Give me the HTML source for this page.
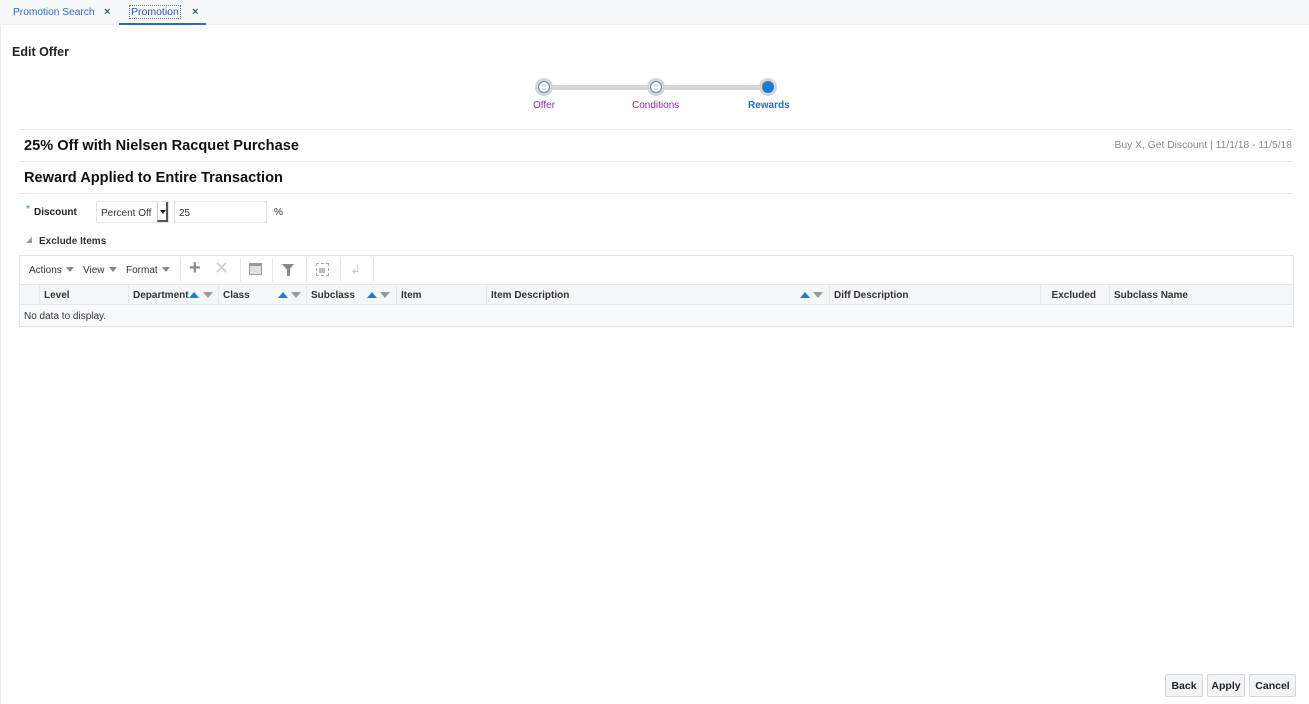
<!DOCTYPE html>
<html><head><meta charset="utf-8"><style>
*{box-sizing:border-box;margin:0;padding:0}
body{width:1309px;height:704px;background:#fff;font-family:"Liberation Sans",sans-serif;font-size:10px;color:#333;position:relative;overflow:hidden}
.a{position:absolute;white-space:nowrap}
.b{font-weight:bold}
.hl{position:absolute;left:19px;width:1274px;height:1px;background:#e0e4e8}
.col{position:absolute;top:284px;height:21px;border-right:1px solid #e4e7eb;font-weight:bold;padding:6px 4px 0;color:#333;white-space:nowrap;font-size:10px}
.up{display:inline-block;width:0;height:0;border-left:5px solid transparent;border-right:5px solid transparent;border-bottom:6px solid #1e7bd8}
.dn{display:inline-block;width:0;height:0;border-left:5px solid transparent;border-right:5px solid transparent;border-top:6px solid #999}
.tri{display:inline-block;width:0;height:0;border-left:4px solid transparent;border-right:4px solid transparent;border-top:5px solid #888;margin-left:4px;vertical-align:1px}
.btn{position:absolute;top:674px;height:23px;border:1px solid #d4d8dc;background:#f2f4f6;font-weight:bold;font-size:10.5px;text-align:center;line-height:22px;border-radius:2px;color:#222}
.sep{position:absolute;top:258px;width:1px;height:24px;background:#e4e7eb}
</style></head><body>
<div class="a" style="left:0;top:0;width:1309px;height:25px;background:#f7f8fa;border-bottom:1px solid #eceff2"></div>
<div class="a" style="left:13px;top:7px;color:#2d6cb5;font-size:10.2px">Promotion Search</div>
<div class="a b" style="left:104px;top:6px;color:#2a5aa0;font-size:11px">×</div>
<div class="a" style="left:129px;top:5px;color:#2a5aa0;font-size:10.5px;border:1px dotted #777;padding:0 1px">Promotion</div>
<div class="a b" style="left:192px;top:6px;color:#2a5aa0;font-size:11px">×</div>
<div class="a" style="left:119px;top:23px;width:87px;height:2px;background:#2d6cb5"></div>
<div class="a" style="left:0;top:25px;width:1px;height:679px;background:#e8eaed"></div>
<div class="a b" style="left:12px;top:45px;font-size:12.5px;color:#222">Edit Offer</div>

<div class="a" style="left:544px;top:85px;width:224px;height:5px;background:#d6d6d6"></div>
<div class="a" style="left:535px;top:78px;width:18px;height:18px;border-radius:50%;background:#d6d6d6"></div>
<div class="a" style="left:538px;top:81px;width:12px;height:12px;border-radius:50%;background:#fff;border:1.5px solid #3e8ee0"></div>
<div class="a" style="left:647px;top:78px;width:18px;height:18px;border-radius:50%;background:#d6d6d6"></div>
<div class="a" style="left:650px;top:81px;width:12px;height:12px;border-radius:50%;background:#fff;border:1.5px solid #3e8ee0"></div>
<div class="a" style="left:759px;top:78px;width:18px;height:18px;border-radius:50%;background:#d6d6d6"></div>
<div class="a" style="left:762px;top:81px;width:12px;height:12px;border-radius:50%;background:#1e7bd8"></div>
<div class="a" style="left:533px;top:100px;color:#8a2c9e">Offer</div>
<div class="a" style="left:632px;top:100px;color:#8a2c9e">Conditions</div>
<div class="a b" style="left:748px;top:100px;color:#2d6cb5">Rewards</div>

<div class="hl" style="top:129px"></div>
<div class="a b" style="left:24px;top:138px;font-size:14.6px;color:#111">25% Off with Nielsen Racquet Purchase</div>
<div class="a" style="right:17px;top:140px;color:#888;font-size:10.3px">Buy X, Get Discount | 11/1/18 - 11/5/18</div>
<div class="hl" style="top:161px"></div>
<div class="a b" style="left:24px;top:170px;font-size:14.6px;color:#111">Reward Applied to Entire Transaction</div>
<div class="hl" style="top:193px"></div>

<div class="a" style="left:26px;top:204px;color:#1e7bd8;font-size:10px">*</div>
<div class="a b" style="left:34px;top:207px;color:#222">Discount</div>
<div class="a" style="left:96px;top:201px;width:73px;height:22px;border:1px solid #e0e3e6;padding:6px 4px;color:#333">Percent Off</div>
<div class="a" style="left:157px;top:202px;width:11px;height:20px;border-left:1px solid #ccc;border-right:2px solid #555;border-bottom:2px solid #555;background:#fff"></div>
<div class="a" style="left:160px;top:210px;width:0;height:0;border-left:3px solid transparent;border-right:3px solid transparent;border-top:4px solid #222"></div>
<div class="a" style="left:174px;top:201px;width:93px;height:22px;border:1px solid #e0e3e6;padding:6px 4px;color:#333">25</div>
<div class="a" style="left:274px;top:207px;color:#333">%</div>

<div class="a" style="left:26px;top:237px;width:0;height:0;border-left:6px solid transparent;border-bottom:6px solid #999"></div>
<div class="a b" style="left:39px;top:236px;color:#333">Exclude Items</div>

<div class="a" style="left:19px;top:255px;width:1275px;height:72px;border:1px solid #dfe3e7;background:#fff"></div>
<div class="a" style="left:20px;top:284px;width:1273px;height:21px;background:#f5f6f8;border-top:1px solid #e4e7eb;border-bottom:1px solid #e4e7eb"></div>
<div class="a" style="left:20px;top:305px;width:1273px;height:21px;background:#f8f9fb"></div>
<div class="a" style="left:29px;top:265px">Actions<span class="tri"></span></div>
<div class="a" style="left:83px;top:265px">View<span class="tri"></span></div>
<div class="a" style="left:126px;top:265px">Format<span class="tri"></span></div>
<div class="sep" style="left:180px"></div>
<div class="a b" style="left:189px;top:257px;font-size:20px;color:#8a8a8a">+</div>
<div class="a" style="left:214px;top:258px;font-size:18px;color:#cfcfcf">✕</div>
<div class="sep" style="left:240px"></div>
<div class="a" style="left:249px;top:263px;width:13px;height:12px;border:1px solid #999;background:#e0e0e0;border-top:3px solid #999"></div>
<div class="sep" style="left:272px"></div>
<div class="a" style="left:282px;top:264px;width:0;height:0;border-left:6px solid transparent;border-right:6px solid transparent;border-top:7px solid #888"></div>
<div class="a" style="left:287px;top:269px;width:3px;height:7px;background:#888"></div>
<div class="sep" style="left:306px"></div>
<div class="a" style="left:316px;top:263px;width:13px;height:13px;border:1px dashed #aaa"></div>
<div class="a" style="left:319px;top:268px;width:6px;height:5px;background:#bbb"></div>
<div class="sep" style="left:340px"></div>
<div class="a" style="left:350px;top:262px;color:#ccc;font-size:13px">↲</div>
<div class="sep" style="left:373px"></div>

<div class="col" style="left:20px;width:20px"></div>
<div class="col" style="left:40px;width:89px">Level</div>
<div class="col" style="left:129px;width:90px">Department<span class="up"></span><span class="dn" style="margin-left:4px"></span></div>
<div class="col" style="left:219px;width:88px">Class<span style="position:absolute;left:59px;top:6px"><span class="up"></span> <span class="dn"></span></span></div>
<div class="col" style="left:307px;width:90px">Subclass<span style="position:absolute;left:60px;top:6px"><span class="up"></span> <span class="dn"></span></span></div>
<div class="col" style="left:397px;width:90px">Item</div>
<div class="col" style="left:487px;width:343px">Item Description<span style="position:absolute;left:313px;top:6px"><span class="up"></span> <span class="dn"></span></span></div>
<div class="col" style="left:830px;width:211px">Diff Description</div>
<div class="col" style="left:1041px;width:69px;text-align:right;padding-right:13px">Excluded</div>
<div class="col" style="left:1110px;width:183px;border-right:none">Subclass Name</div>
<div class="a" style="left:24px;top:311px;color:#333">No data to display.</div>

<div class="btn" style="left:1165px;width:38px">Back</div>
<div class="btn" style="left:1207px;width:38px">Apply</div>
<div class="btn" style="left:1249px;width:47px">Cancel</div>
</body></html>
